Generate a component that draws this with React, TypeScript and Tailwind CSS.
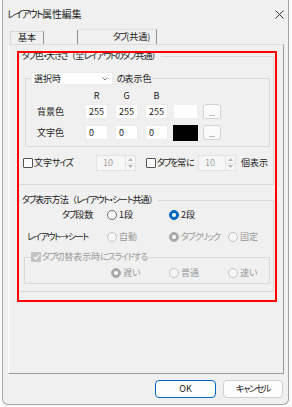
import React from "react";

const KANA = /([\u3041-\u309F\u30A0-\u30FF]+)/;

function T({ children, k = "tracking-[-1.3px]", o = "" }: { children: string; k?: string; o?: string }) {
  const parts = children.split(KANA);
  return (
    <>
      {parts.map((p, i) =>
        p === "" ? null : KANA.test(p) ? (
          <span key={i} className={"[font-feature-settings:'palt'] " + k}>{p}</span>
        ) : (
          <span key={i} className={o}>{p}</span>
        )
      )}
    </>
  );
}

function Radio({ label, state, disabled, className = "" }: { label: string; state?: boolean; disabled?: boolean; className?: string }) {
  let circle = "border border-[#6b6b6b] bg-[#fbfbfb]";
  if (state && !disabled) circle = "bg-[#0067c0] border border-[#0067c0]";
  if (state && disabled) circle = "bg-[#a9a9a9] border border-[#a9a9a9]";
  if (!state && disabled) circle = "border border-[#c4c4c4] bg-[#f7f7f7]";
  return (
    <div className={"flex items-center h-[14px] " + className}>
      <div className={"w-[10px] h-[10px] rounded-full flex items-center justify-center shrink-0 " + circle}>
        {state ? <div className="w-[4px] h-[4px] rounded-full bg-white" /> : null}
      </div>
      <span className={"ml-[2px] whitespace-nowrap " + (disabled ? "text-[#9a9a9a]" : "")}><T>{label}</T></span>
    </div>
  );
}

function Spinner({ w }: { w: string }) {
  return (
    <div className={"h-[16px] flex border border-[#e3e3e3] bg-[#f6f6f6] " + w}>
      <div className="flex-1 pl-[6px] flex items-center text-[#a3a3a3]">10</div>
      <div className="w-[10px] border-l border-[#e3e3e3] flex flex-col">
        <div className="flex-1 flex items-center justify-center border-b border-[#e3e3e3]">
          <svg width="5" height="3" viewBox="0 0 5 3"><path d="M0 3 L2.5 0 L5 3 Z" fill="#b5b5b5" /></svg>
        </div>
        <div className="flex-1 flex items-center justify-center">
          <svg width="5" height="3" viewBox="0 0 5 3"><path d="M0 0 L2.5 3 L5 0 Z" fill="#b5b5b5" /></svg>
        </div>
      </div>
    </div>
  );
}

function Field({ v }: { v: string }) {
  return (
    <div className="w-[23px] h-[15px] bg-white border border-[#ececec] pl-[3px] flex items-center">{v}</div>
  );
}

function DotsBtn() {
  return (
    <div className="w-[18px] h-[15px] rounded-[3px] border border-[#d3d3d3] bg-[#fbfbfb] flex items-end justify-center text-[7px] leading-[9px] text-[#555]">...</div>
  );
}

export default function App() {
  return (
    <div className="relative w-[292px] h-[407px] bg-[#fafafa] font-['Noto_Sans_CJK_JP','Noto_Sans',sans-serif] text-[9px] leading-[12px] text-[#1a1a1a]">
      <div className="ml-[2px] w-[287px] h-[405px] bg-[#f0f0f0] border-l border-r border-b border-[#a5a5a5] rounded-b-[6px] flex flex-col">
        {/* title bar */}
        <div className="h-[28px] flex items-center justify-between pl-[4px] pr-[4px] shrink-0">
          <span className="text-[9.8px] whitespace-nowrap"><T k="tracking-[-1.5px]">レイアウト属性編集</T></span>
          <svg width="9" height="9" viewBox="0 0 9 9" className="mt-[1px]">
            <path d="M0.5 0.5 L8.5 8.5 M8.5 0.5 L0.5 8.5" stroke="#333" strokeWidth="1" />
          </svg>
        </div>
        {/* tabs */}
        <div className="h-[16px] flex items-end pl-[7px] shrink-0">
          <div className="w-[34px] h-[13px] border-l border-t border-r border-l-[#d6d6d6] border-t-[#d6d6d6] border-r-[#8f8f8f] flex items-center justify-center">基本</div>
          <div className="w-[34px] h-[14px] border-r border-r-[#8f8f8f]" />
          <div className="w-[79px] h-[15px] border-r border-t border-t-[#e2e2e2] border-r-[#8f8f8f] pl-[35px] flex items-center whitespace-nowrap"><T>タブ</T>(共通)</div>
        </div>
        {/* panel */}
        <div className="ml-[5px] w-[276px] h-[330px] shrink-0 border border-l-white border-t-[#dcdcdc] border-r-[#9c9c9c] border-b-[#9c9c9c] flex flex-col">
          {/* group 1 */}
          <fieldset className="mt-[5px] ml-[9px] w-[256px] border border-[#dadada] pb-[13px]">
            <legend className="ml-[2px] px-[1px] h-[12px] whitespace-nowrap"><T k="tracking-[-1.5px]" o="tracking-[-0.8px]">タブ色・大きさ（全レイアウトのタブ共通）</T></legend>
            <fieldset className="mt-[10px] ml-[6px] w-[245px] border border-[#dadada] pb-[6px]">
              <legend className="ml-[5px] pr-[1px] h-[13px] flex items-center">
                <div className="w-[82px] h-[13px] bg-white border border-[#ececec] flex items-center justify-between pl-[2px] pr-[4px]">
                  <span>選択時</span>
                  <svg width="6" height="4" viewBox="0 0 6 4"><path d="M0.5 0.5 L3 3 L5.5 0.5" stroke="#555" strokeWidth="0.8" fill="none" /></svg>
                </div>
                <span className="ml-[4px] whitespace-nowrap"><T>の表示色</T></span>
              </legend>
              <div className="mt-[5px] h-[11px] flex items-center">
                <div className="w-[59px]" />
                <div className="w-[23px] text-center">R</div>
                <div className="w-[23px] ml-[7px] text-center">G</div>
                <div className="w-[23px] ml-[7px] text-center">B</div>
              </div>
              <div className="mt-[3px] h-[15px] flex items-center">
                <div className="w-[59px] pl-[11px]">背景色</div>
                <Field v="255" />
                <div className="ml-[7px]"><Field v="255" /></div>
                <div className="ml-[7px]"><Field v="255" /></div>
                <div className="ml-[5px] w-[25px] h-[15px] bg-white border border-[#f0f0f0]" />
                <div className="ml-[5px]"><DotsBtn /></div>
              </div>
              <div className="mt-[6px] h-[15px] flex items-center">
                <div className="w-[59px] pl-[11px]">文字色</div>
                <Field v="0" />
                <div className="ml-[7px]"><Field v="0" /></div>
                <div className="ml-[7px]"><Field v="0" /></div>
                <div className="ml-[5px] w-[25px] h-[16px] bg-black" />
                <div className="ml-[5px]"><DotsBtn /></div>
              </div>
            </fieldset>
            <div className="mt-[8px] h-[16px] flex items-center pl-[4px]">
              <div className="w-[73px] flex items-center">
                <div className="w-[10px] h-[10px] border border-[#555] bg-[#fbfbfb] rounded-[1px]" />
                <span className="ml-[1px] whitespace-nowrap"><T>文字サイズ</T></span>
              </div>
              <Spinner w="w-[40px]" />
              <div className="ml-[10px] w-[52px] flex items-center">
                <div className="w-[10px] h-[10px] border border-[#555] bg-[#fbfbfb] rounded-[1px]" />
                <span className="ml-[1px] whitespace-nowrap"><T>タブを常に</T></span>
              </div>
              <Spinner w="w-[38px]" />
              <span className="ml-[5px]">個表示</span>
            </div>
          </fieldset>
          {/* group 2 */}
          <fieldset className="mt-[9px] ml-[9px] w-[256px] border border-[#dadada] pb-[7px]">
            <legend className="ml-[2px] px-[1px] h-[12px] whitespace-nowrap"><T o="tracking-[-0.8px]">タブ表示方法（レイアウト・シート共通）</T></legend>
            <div className="mt-[2px] h-[14px] flex items-center">
              <div className="w-[88px] pl-[43px] whitespace-nowrap"><T>タブ段数</T></div>
              <Radio label="1段" className="w-[62px]" />
              <Radio label="2段" state />
            </div>
            <div className="mt-[8px] h-[14px] flex items-center">
              <div className="w-[88px] pl-[8px] whitespace-nowrap"><T>レイアウト</T><span className="tracking-[-1px]">→</span><T>シート</T></div>
              <Radio label="自動" disabled className="w-[62px]" />
              <Radio label="タブクリック" state disabled className="w-[59px]" />
              <Radio label="固定" disabled />
            </div>
            <fieldset className="mt-[7px] ml-[5px] w-[246px] border border-[#dadada] pb-[3px]">
              <legend className="ml-[6px] pr-[1px] h-[12px] flex items-center">
                <div className="w-[10px] h-[10px] rounded-[1px] bg-[#c3c3c3] flex items-center justify-center">
                  <svg width="7" height="6" viewBox="0 0 7 6"><path d="M0.8 3 L2.7 4.9 L6.2 1" stroke="white" strokeWidth="1.2" fill="none" /></svg>
                </div>
                <span className="ml-[1px] text-[#9a9a9a] whitespace-nowrap"><T>タブ切替表示時にスライドする</T></span>
              </legend>
              <div className="mt-[3px] h-[14px] flex items-center">
                <div className="w-[86px]" />
                <Radio label="遅い" state disabled className="w-[58px]" />
                <Radio label="普通" disabled className="w-[59px]" />
                <Radio label="速い" disabled />
              </div>
            </fieldset>
          </fieldset>
        </div>
        {/* buttons */}
        <div className="mt-[6px] flex justify-end gap-[7px] pr-[5px]">
          <div className="w-[61px] h-[18px] rounded-[4px] border border-[#0067c0] bg-[#fdfdfd] flex items-center justify-center">OK</div>
          <div className="w-[60px] h-[18px] rounded-[4px] border border-[#d0d0d0] bg-[#fdfdfd] flex items-center justify-center"><T>キャンセル</T></div>
        </div>
      </div>
      {/* red annotation overlay */}
      <div className="absolute left-[17px] top-[51px] w-[260px] h-[251px] border-2 border-[#ff0000] pointer-events-none" />
    </div>
  );
}
